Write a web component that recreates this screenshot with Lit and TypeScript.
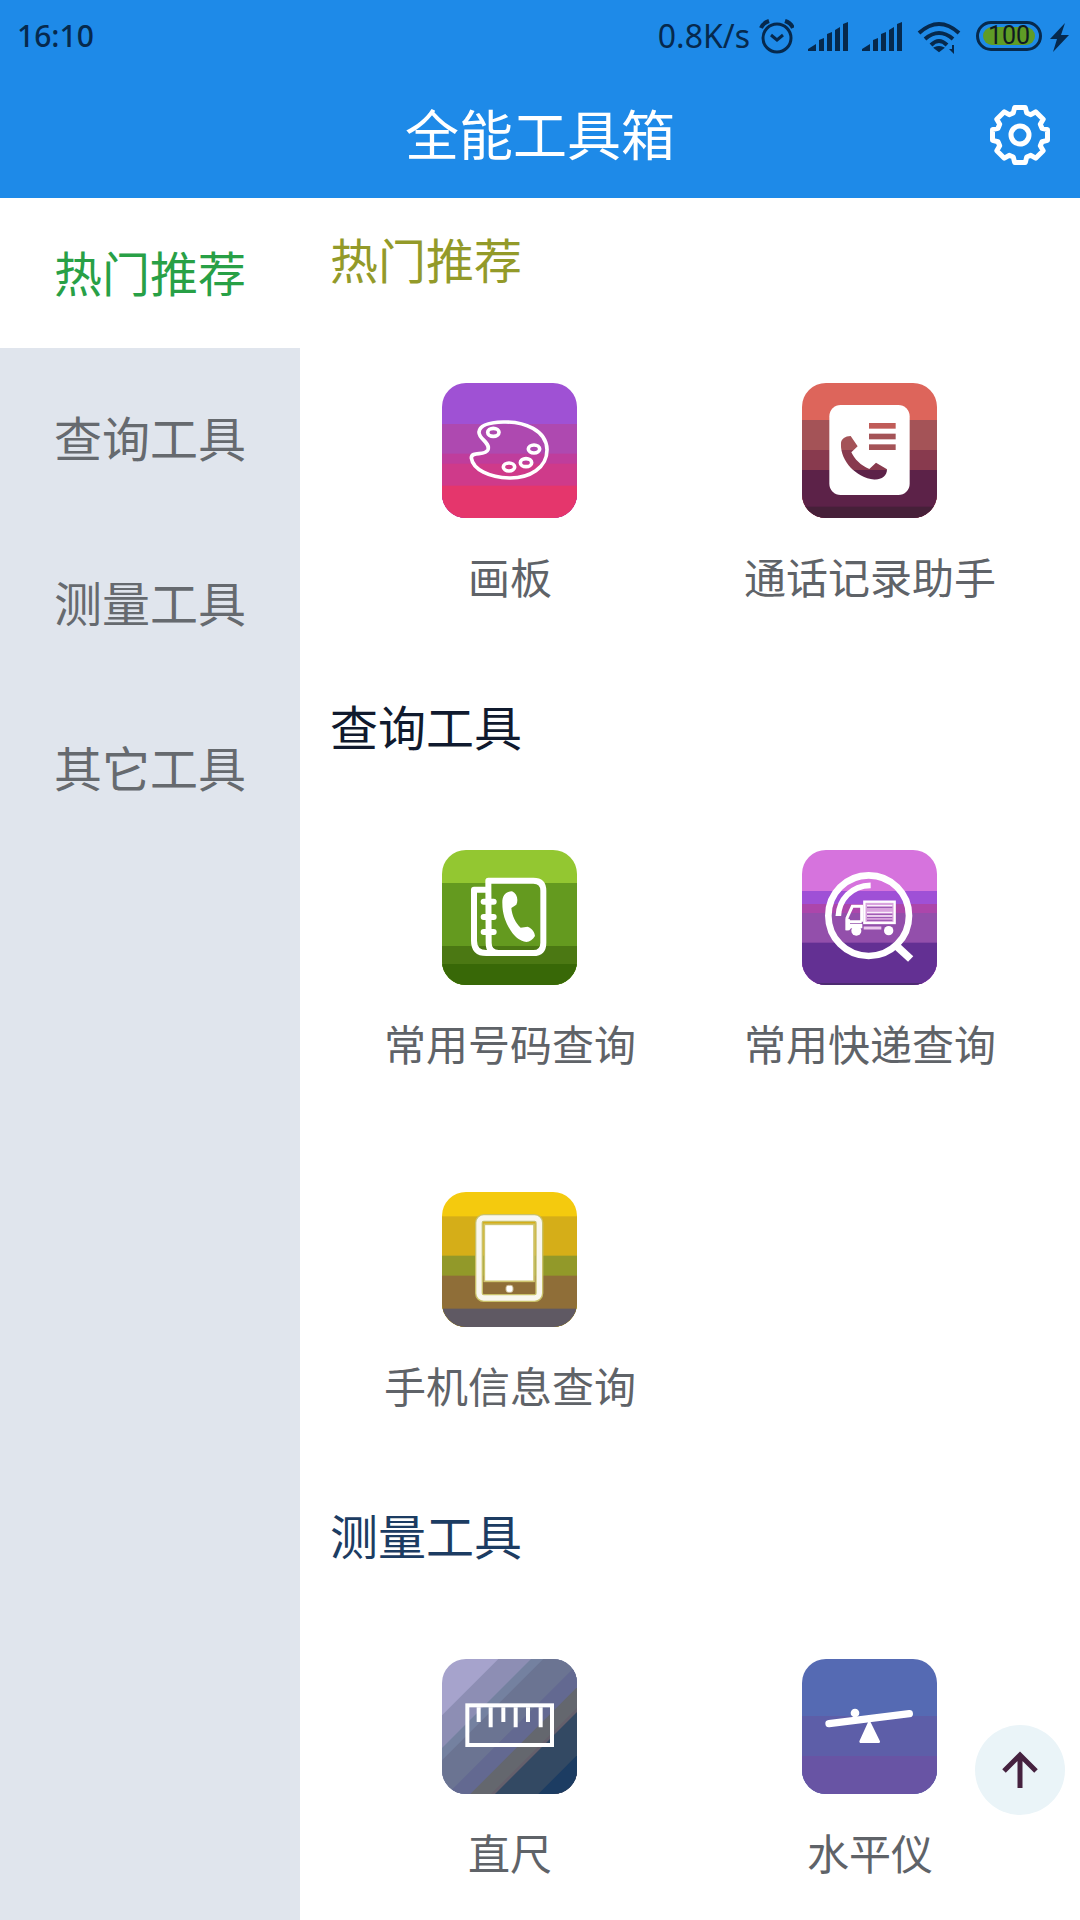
import { LitElement, html, svg, css, SVGTemplateResult } from "lit";
import { customElement, property, state } from "lit/decorators.js";
import { classMap } from "lit/directives/class-map.js";

interface Tool {
  name: string;
  icon: string;
}

interface Section {
  title: string;
  tone: string;
  tools: Tool[];
}

const SECTIONS: Section[] = [
  {
    title: "热门推荐",
    tone: "olive",
    tools: [
      { name: "画板", icon: "palette" },
      { name: "通话记录助手", icon: "calls" },
    ],
  },
  {
    title: "查询工具",
    tone: "ink",
    tools: [
      { name: "常用号码查询", icon: "phonebook" },
      { name: "常用快递查询", icon: "courier" },
      { name: "手机信息查询", icon: "device" },
    ],
  },
  {
    title: "测量工具",
    tone: "navy",
    tools: [
      { name: "直尺", icon: "ruler" },
      { name: "水平仪", icon: "level" },
    ],
  },
];

const CATEGORIES = ["热门推荐", "查询工具", "测量工具", "其它工具"];

/** Horizontal colour bands: each entry is [top edge, colour]. */
const bands = (list: [number, string][]) =>
  list.map(([y, c]) => svg`<rect x="0" y=${y} width="480" height=${480 - y} fill=${c}></rect>`);

/** Diagonal colour bands along x + y = d. */
const diagonals = (list: [number, string][]) =>
  list.map(([d, c]) => svg`<path d=${`M${d} 0H1000V1000H${d - 1000}Z`} fill=${c}></path>`);

const ICONS: Record<string, { box: string; art: SVGTemplateResult }> = {
  palette: {
    box: "36 39 405 405",
    art: svg`
      ${bands([[0, "#9f51d4"], [162, "#ae49b0"], [251, "#bf3d9c"], [281, "#cf3a8a"], [347, "#e5366c"]])}
      <g fill="none" stroke="#fff" stroke-width="11">
        <path d="M220 156C285 154 349 182 351 238C352 294 298 325 238 324C178 322 129 299 124 264C124 242 166 260 174 239C181 217 146 207 147 186C149 163 181 157 220 156Z"></path>
        <ellipse cx="190" cy="187" rx="17" ry="12"></ellipse>
        <ellipse cx="312" cy="237" rx="17" ry="12"></ellipse>
        <ellipse cx="288" cy="278" rx="17" ry="12"></ellipse>
        <ellipse cx="237" cy="291" rx="17" ry="12"></ellipse>
      </g>`,
  },
  calls: {
    box: "36 39 405 405",
    art: svg`
      ${bands([[0, "#dd655b"], [150, "#a45357"], [240, "#883a4e"], [300, "#5c2248"], [410, "#462039"]])}
      <rect x="118" y="105" width="241" height="270" rx="34" fill="#fff"></rect>
      <rect x="237" y="159" width="80" height="17" fill="#c05c58"></rect>
      <rect x="237" y="191" width="80" height="17" fill="#a45357"></rect>
      <rect x="237" y="223" width="80" height="17" fill="#a45357"></rect>
      <clipPath id="handset"><path d="M153 218C155 207 165 198 182 198L203 229L184 247C194 268 212 286 238 297L258 278L291 298C291 317 277 329 253 329C194 322 149 268 153 218Z"></path></clipPath>
      <g clip-path="url(#handset)">
        <rect x="140" y="190" width="160" height="50" fill="#a45357"></rect>
        <rect x="140" y="240" width="160" height="60" fill="#883a4e"></rect>
        <rect x="140" y="300" width="160" height="40" fill="#5c2248"></rect>
      </g>`,
  },
  phonebook: {
    box: "36 30 405 405",
    art: svg`
      ${bands([[0, "#93c731"], [129, "#649a1f"], [318, "#4b7813"], [372, "#386807"]])}
      <g fill="none" stroke="#fff" stroke-width="18" stroke-linejoin="round">
        <path d="M175 122H310Q340 122 340 152V308Q340 339 310 339H206Q176 339 176 309Z"></path>
        <path d="M176 149H132V302Q132 339 169 339H206"></path>
      </g>
      <g fill="#fff">
        <rect x="152" y="176" width="48" height="18" rx="9"></rect>
        <rect x="152" y="222" width="48" height="18" rx="9"></rect>
        <rect x="152" y="267" width="48" height="18" rx="9"></rect>
        <path d="M217 190C216 168 226 155 246 154C261 161 266 178 259 194L244 204C246 226 256 248 272 263L293 260C307 265 314 277 315 288C308 299 300 305 289 306C270 303 257 292 247 279C228 253 217 224 217 190Z"></path>
      </g>`,
  },
  courier: {
    box: "36 30 405 405",
    art: svg`
      ${bands([[0, "#d673dd"], [153, "#9f50d6"], [192, "#ac46ab"], [219, "#934fab"], [308, "#633093"], [429, "#4c2b70"]])}
      <g fill="none" stroke="#fff">
        <circle cx="236" cy="227" r="121" stroke-width="20"></circle>
        <path d="M145 228C147 180 183 137 242 136" stroke-width="17"></path>
        <path d="M315 314L362 357" stroke-width="23"></path>
        <path d="M171 271V234L187 199H215V245" stroke-width="9"></path>
        <path d="M171 245H215" stroke-width="9"></path>
      </g>
      <path d="M167 236L180 238V252H217V265H183L178 271H167Z" fill="#fff"></path>
      <rect x="223" y="185" width="91" height="64" fill="#d9a3de" stroke="#fff" stroke-width="7"></rect>
      <path d="M231 202H307M231 223H307M231 232H307M231 241H307" stroke="#934fab" stroke-width="3"></path>
      <path d="M231 197H307M231 217H307M231 228H307" stroke="#fff" stroke-width="3"></path>
      <path d="M221 264H274" stroke="#ecc9ee" stroke-width="9"></path>
      <circle cx="199" cy="272" r="15" fill="#fff"></circle>
      <circle cx="296" cy="272" r="14" fill="#fff"></circle>`,
  },
  device: {
    box: "36 37 405 405",
    art: svg`
      ${bands([[0, "#f4ca0e"], [110, "#d5ae18"], [228, "#929929"], [288, "#8f6e38"], [387, "#5f5963"]])}
      <rect x="147" y="115" width="181" height="240" rx="14" fill="none" stroke="#c9c169" stroke-width="24"></rect>
      <rect x="147" y="115" width="181" height="240" rx="14" fill="none" stroke="#f9f7ee" stroke-width="16"></rect>
      <rect x="163" y="134" width="149" height="171" fill="#fff" stroke="#cfc56f" stroke-width="5"></rect>
      <rect x="228" y="317" width="21" height="21" rx="7" fill="#fff" stroke="#c9b98f" stroke-width="3"></rect>`,
  },
  ruler: {
    box: "36 42 405 405",
    art: svg`
      ${diagonals([[0, "#a6a3cc"], [247, "#8d8eb4"], [345, "#7481a0"], [382, "#6b7492"], [500, "#636991"], [568, "#64676e"], [630, "#655f6b"], [642, "#334963"], [772, "#1c3c62"]])}
      <rect x="112" y="181" width="254" height="119" fill="none" stroke="#fff" stroke-width="12"></rect>
      <path d="M146 187V231M182 187V247M220 187V231M257 187V247M294 187V231M332 187V247" stroke="#fff" stroke-width="12"></path>`,
  },
  level: {
    box: "36 42 405 405",
    art: svg`
      ${bands([[0, "#556ab3"], [213, "#5d5ea8"], [333, "#6854a4"]])}
      <path d="M117 236L358 206" stroke="#fff" stroke-width="22" stroke-linecap="round"></path>
      <circle cx="195" cy="204" r="13" fill="#fff"></circle>
      <path d="M238 233L212 290H266Z" fill="#fff" stroke="#fff" stroke-width="8" stroke-linejoin="round"></path>`,
  },
};

/** Outline of an eight-toothed gear centred on the origin. */
const gearOutline = (() => {
  const points: string[] = [];
  for (let tooth = 0; tooth < 8; tooth++) {
    for (const [offset, r] of [[-17, 23], [-11, 28], [11, 28], [17, 23]]) {
      const a = ((tooth * 45 + offset) * Math.PI) / 180;
      points.push(`${(r * Math.sin(a)).toFixed(2)} ${(-r * Math.cos(a)).toFixed(2)}`);
    }
  }
  return `M${points.join("L")}Z`;
})();

@customElement("status-bar")
export class StatusBar extends LitElement {
  static styles = css`
    :host {
      display: flex;
      align-items: center;
      justify-content: space-between;
      height: 72px;
      padding: 0 10px 0 17px;
      color: #06294d;
      font: 500 30px/40px "Noto Sans", sans-serif;
    }
    .icons {
      display: flex;
      align-items: center;
      gap: 14px;
    }
    .pair {
      display: flex;
      align-items: center;
      gap: 8px;
    }
    .speed {
      font-size: 32px;
      font-weight: 400;
    }
    svg {
      display: block;
      height: 40px;
    }
    .battery {
      display: flex;
      box-sizing: border-box;
      width: 66px;
      height: 30px;
      padding: 3px 4px;
      border: 3px solid #06294d;
      border-radius: 15px;
    }
    .charge {
      flex: 1;
      display: flex;
      align-items: center;
      justify-content: center;
      border-radius: 9px;
      background: #5f9c26;
      color: #101a22;
      font: 400 25px/18px Roboto, sans-serif;
    }
  `;

  private signal() {
    return html`<svg width="40" viewBox="808 15 40 40" fill="currentColor" aria-hidden="true">
      <path d="M808 50V48L816 43V50ZM819 50V39L824 37V50ZM827 50V33L832 31V50ZM835 50V29L840 26V50ZM843 50V23L848 21V50Z"></path>
    </svg>`;
  }

  render() {
    return html`
      <span>16:10</span>
      <div class="icons">
        <div class="pair">
          <span class="speed">0.8K/s</span>
          <svg width="36" viewBox="758 15 36 40" fill="none" stroke="currentColor" stroke-width="3" aria-hidden="true">
            <circle cx="777" cy="37" r="14"></circle>
            <path d="M771 34L777 39L783 34"></path>
            <path d="M761 27Q763 22 769 20M785 20Q791 22 793 27" stroke-width="4"></path>
          </svg>
        </div>
        ${this.signal()} ${this.signal()}
        <svg width="46" viewBox="916 15 46 40" fill="none" stroke="currentColor" stroke-width="4" aria-hidden="true">
          <path d="M919 32Q939 14 959 32M925 38Q939 26 953 38M931 44Q939 36 947 44"></path>
          <path d="M935 47Q939 45 943 47L939 50Z" fill="currentColor" stroke-width="2"></path>
          <path d="M952 44H954V53L949 48H952Z" fill="currentColor" stroke="none"></path>
        </svg>
        <div class="pair">
          <span class="battery"><span class="charge">100</span></span>
          <svg width="20" viewBox="1050 15 20 40" fill="currentColor" aria-hidden="true">
            <path d="M1065 22L1050 38H1057L1053 51L1069 34H1061Z"></path>
          </svg>
        </div>
      </div>
    `;
  }
}

@customElement("tool-tile")
export class ToolTile extends LitElement {
  static styles = css`
    :host {
      display: block;
    }
    .tile {
      display: flex;
      flex-direction: column;
      align-items: center;
      gap: 26px;
      width: 100%;
      padding: 60px 0 57px;
      border: 0;
      background: none;
      color: #5f6368;
      font: 400 42px/64px "Noto Sans CJK SC", sans-serif;
      cursor: pointer;
    }
    .icon {
      display: block;
      width: 135px;
      height: 135px;
      margin-right: 1px;
      border-radius: 24px;
    }
  `;

  @property() name = "";
  @property() icon = "";

  render() {
    const { box, art } = ICONS[this.icon];
    return html`<button class="tile" type="button">
      <svg class="icon" viewBox=${box} aria-hidden="true">${art}</svg>
      <span>${this.name}</span>
    </button>`;
  }
}

@customElement("app-root")
export class AppRoot extends LitElement {
  static styles = css`
    :host {
      display: flex;
      flex-direction: column;
      position: relative;
      height: 100vh;
      background: #fff;
      font-family: "Noto Sans CJK SC", sans-serif;
    }
    button {
      border: 0;
      font-family: inherit;
      cursor: pointer;
    }
    svg {
      display: block;
      overflow: visible;
    }
    .header {
      background: #1e8ae8;
    }
    .bar {
      display: grid;
      grid-template-columns: 60px 1fr 60px;
      align-items: center;
      height: 126px;
      padding: 0 30px;
    }
    .title {
      grid-column: 2;
      margin: 0;
      padding-bottom: 4px;
      color: #fff;
      font-size: 54px;
      font-weight: 400;
      line-height: 80px;
      text-align: center;
    }
    .settings {
      padding: 0;
      background: none;
    }
    .body {
      flex: 1;
      display: flex;
      min-height: 0;
    }
    .sidebar {
      flex: none;
      display: flex;
      flex-direction: column;
      gap: 15px;
      width: 300px;
      background: #e0e5ed;
    }
    .category {
      height: 150px;
      padding: 0 0 4px;
      background: none;
      color: #666a6f;
      font-size: 48px;
      line-height: 72px;
    }
    .category.active {
      background: #fff;
      color: #28a046;
    }
    .content {
      flex: 1;
      padding: 0 30px;
      overflow-y: auto;
      scrollbar-width: none;
    }
    .heading {
      margin: 0;
      padding: 24px 0 29px;
      font-size: 48px;
      font-weight: 400;
      line-height: 72px;
    }
    .olive {
      color: #939a29;
    }
    .ink {
      color: #101a2e;
    }
    .navy {
      color: #1c3c62;
    }
    .grid {
      display: grid;
      grid-template-columns: repeat(2, 1fr);
    }
    .to-top {
      position: absolute;
      right: 15px;
      bottom: 105px;
      display: flex;
      align-items: center;
      justify-content: center;
      width: 90px;
      height: 90px;
      padding: 0;
      border-radius: 50%;
      background: #eaf4f8;
    }
  `;

  @state() private active = CATEGORIES[0];

  private get content() {
    return this.renderRoot.querySelector(".content")!;
  }

  private select(name: string) {
    this.active = name;
    const index = SECTIONS.findIndex((s) => s.title === name);
    this.content.querySelectorAll("section")[index]?.scrollIntoView({ behavior: "smooth" });
  }

  render() {
    return html`
      <header class="header">
        <status-bar></status-bar>
        <div class="bar">
          <h1 class="title">全能工具箱</h1>
          <button class="settings" type="button" aria-label="设置">
            <svg width="60" height="60" viewBox="-30 -30 60 60" fill="none" stroke="#fff" stroke-width="5" stroke-linejoin="round">
              <path d=${gearOutline}></path>
              <circle r="9"></circle>
            </svg>
          </button>
        </div>
      </header>
      <div class="body">
        <nav class="sidebar">
          ${CATEGORIES.map(
            (name) => html`<button
              type="button"
              class=${classMap({ category: true, active: name === this.active })}
              @click=${() => this.select(name)}
            >${name}</button>`
          )}
        </nav>
        <main class="content">
          ${SECTIONS.map(
            (s) => html`<section>
              <h2 class="heading ${s.tone}">${s.title}</h2>
              <div class="grid">
                ${s.tools.map((t) => html`<tool-tile .name=${t.name} .icon=${t.icon}></tool-tile>`)}
              </div>
            </section>`
          )}
        </main>
      </div>
      <button
        class="to-top"
        type="button"
        aria-label="回到顶部"
        @click=${() => this.content.scrollTo({ top: 0, behavior: "smooth" })}
      >
        <svg width="40" height="40" viewBox="0 0 40 40" fill="none" stroke="#45213f" stroke-width="5">
          <path d="M20 38V5M4 21L20 5L36 21"></path>
        </svg>
      </button>
    `;
  }
}
